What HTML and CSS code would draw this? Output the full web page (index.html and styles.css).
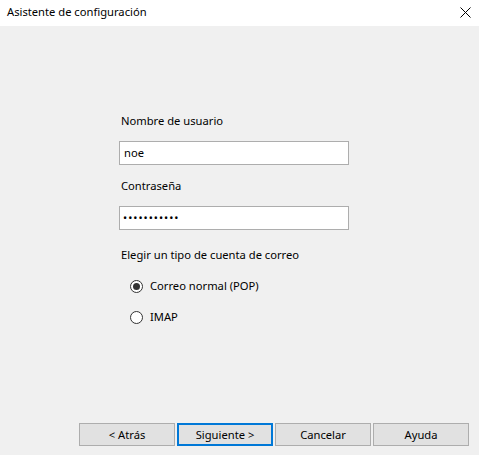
FILE: index.html
```html
<!DOCTYPE html>
<html lang="es">
<head>
<meta charset="utf-8">
<title>Asistente de configuración</title>
<link rel="stylesheet" href="styles.css">
</head>
<body>
<div class="window">
  <div class="titlebar">
    <span class="title">Asistente de configuración</span>
    <span class="close" aria-label="Cerrar">
      <svg width="11" height="11" viewBox="0 0 11 11"><path d="M0.5 0.5 L10.5 10.5 M10.5 0.5 L0.5 10.5" stroke="#000" stroke-width="1" fill="none"/></svg>
    </span>
  </div>
  <div class="body">
    <div class="form">
      <div class="label">Nombre de usuario</div>
      <div class="field">noe</div>
      <div class="label">Contraseña</div>
      <div class="field pass">•••••••••••</div>
      <div class="label group">Elegir un tipo de cuenta de correo</div>
      <div class="radio"><span class="dot checked"></span><span>Correo normal (POP)</span></div>
      <div class="radio"><span class="dot"></span><span>IMAP</span></div>
    </div>
    <div class="footer">
      <button class="btn">&lt; Atrás</button>
      <button class="btn default">Siguiente &gt;</button>
      <button class="btn">Cancelar</button>
      <button class="btn">Ayuda</button>
    </div>
  </div>
</div>
</body>
</html>
```
FILE: styles.css
```css
* { box-sizing: border-box; }
html, body { margin: 0; padding: 0; }
body {
  width: 479px;
  height: 455px;
  background: #f0f0f0;
  font-family: "Noto Sans", "Liberation Sans", sans-serif;
  font-size: 11.2px;
  color: #000;
  overflow: hidden;
}
.window {
  display: flex;
  flex-direction: column;
  height: 455px;
}
.titlebar {
  height: 26px;
  background: #fff;
  display: flex;
  align-items: center;
  justify-content: space-between;
  padding: 0 8px 2px 7px;
}
.title { line-height: 16px; }
.close { display: flex; width: 11px; height: 11px; }
.body {
  flex: 1;
  display: flex;
  flex-direction: column;
}
.form {
  display: flex;
  flex-direction: column;
  align-items: flex-start;
  padding-left: 119px;
  padding-top: 87px;
}
.label {
  line-height: 16px;
  padding-left: 2px;
  margin-bottom: 12px;
}
.field {
  width: 230px;
  height: 24px;
  background: #fff;
  border: 1px solid #adadad;
  padding: 0 4px;
  line-height: 22px;
  margin-bottom: 13px;
}
.field.pass {
  letter-spacing: 1px;
  font-size: 11px;
  padding-left: 3px;
  margin-bottom: 17px;
}
.label.group { margin-bottom: 15px; }
.radio {
  display: flex;
  align-items: center;
  gap: 7px;
  margin-left: 11px;
  height: 16px;
  line-height: 16px;
  margin-bottom: 15px;
}
.dot {
  width: 13px;
  height: 13px;
  border: 1px solid #333;
  border-radius: 50%;
  background: #fff;
  display: flex;
  align-items: center;
  justify-content: center;
}
.dot.checked::after {
  content: "";
  width: 7px;
  height: 7px;
  border-radius: 50%;
  background: #333;
}
.footer {
  margin-top: auto;
  display: flex;
  justify-content: flex-end;
  gap: 2px;
  padding: 0 10px 9px 0;
}
.btn {
  width: 96px;
  height: 23px;
  background: #e1e1e1;
  border: 1px solid #adadad;
  font: inherit;
  color: #000;
  padding: 0;
  line-height: 20px;
}
.btn.default {
  border: 2px solid #0078d7;
}
```
